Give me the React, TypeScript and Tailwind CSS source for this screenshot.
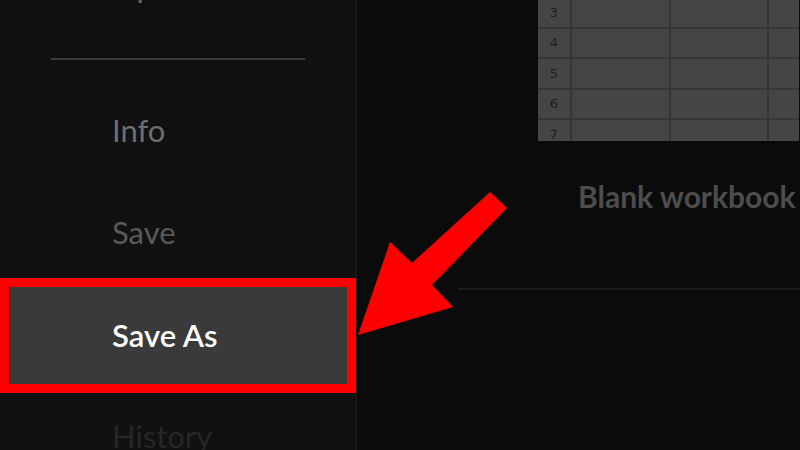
import React from 'react'

const rows = ['3', '4', '5', '6', '7']

function SheetThumb() {
  return (
    <div className="w-[264px] h-[143px] overflow-hidden bg-[#454545] border-l-[3px] border-b-2 border-[#0a0a0a]">
      <div className="-mt-[2px]">
        {rows.map((r) => (
          <div key={r} className="flex h-[30.5px] border-b-2 border-[#363636]">
            <div className="w-[34px] shrink-0 border-r-2 border-[#363636] flex items-center justify-center text-[13px] text-[#1e1e1e] font-['DejaVu_Sans',sans-serif]">
              {r}
            </div>
            <div className="w-[99px] shrink-0 border-r-2 border-[#363636]" />
            <div className="w-[98px] shrink-0 border-r-2 border-[#363636]" />
            <div className="flex-1" />
          </div>
        ))}
      </div>
    </div>
  )
}

export default function App() {
  return (
    <div className="relative w-[800px] h-[450px] overflow-hidden flex bg-[#0b0b0b] font-['Lato','Liberation_Sans',sans-serif]">
      {/* backstage menu */}
      <aside className="w-[357px] shrink-0 h-full bg-[#111111] border-r border-[#1a1a1a] flex flex-col">
        <div className="shrink-0 h-[40px] -mt-[34px] pl-[112px] text-[31px] leading-[40px] text-[#6a6a6a]">Open</div>
        <div className="shrink-0 h-[54px] flex items-end">
          <div className="ml-[51px] w-[254px] h-[2px] bg-[#3a3a3a]" />
        </div>
        <div className="shrink-0 mt-[20px] h-[100px] flex items-center pl-[112px] text-[31px] leading-none text-[#6e6e6e]">Info</div>
        <div className="shrink-0 h-[98px] pt-[6px] flex items-center pl-[112px] text-[31px] leading-none text-[#5a5a5a]">Save</div>
        <div className="shrink-0 h-[115px] border-[9px] border-[#ff0000] bg-[#3a3a3a] flex items-center pl-[103px] text-[31px] leading-none font-semibold text-white">
          Save As
        </div>
        <div className="shrink-0 h-[86px] flex items-center pl-[112px] text-[31px] leading-none text-[#262626]">History</div>
      </aside>

      {/* templates */}
      <main className="flex-1 flex flex-col">
        <div className="shrink-0 ml-[178px]">
          <SheetThumb />
        </div>
        <div className="shrink-0 mt-[34px] ml-[221px] text-[30px] leading-[38px] font-bold text-[#4d4d4d] whitespace-nowrap">
          Blank workbook
        </div>
        <div className="shrink-0 mt-[73px] ml-[101px] h-[2px] bg-[#1c1c1c]" />
      </main>

      <svg className="absolute inset-0 pointer-events-none" width="800" height="450" viewBox="0 0 800 450">
        <polygon
          points="490,192 507,208 432,285 453,307 358,335 390,242 412,263"
          fill="#ff0000"
        />
      </svg>
    </div>
  )
}
